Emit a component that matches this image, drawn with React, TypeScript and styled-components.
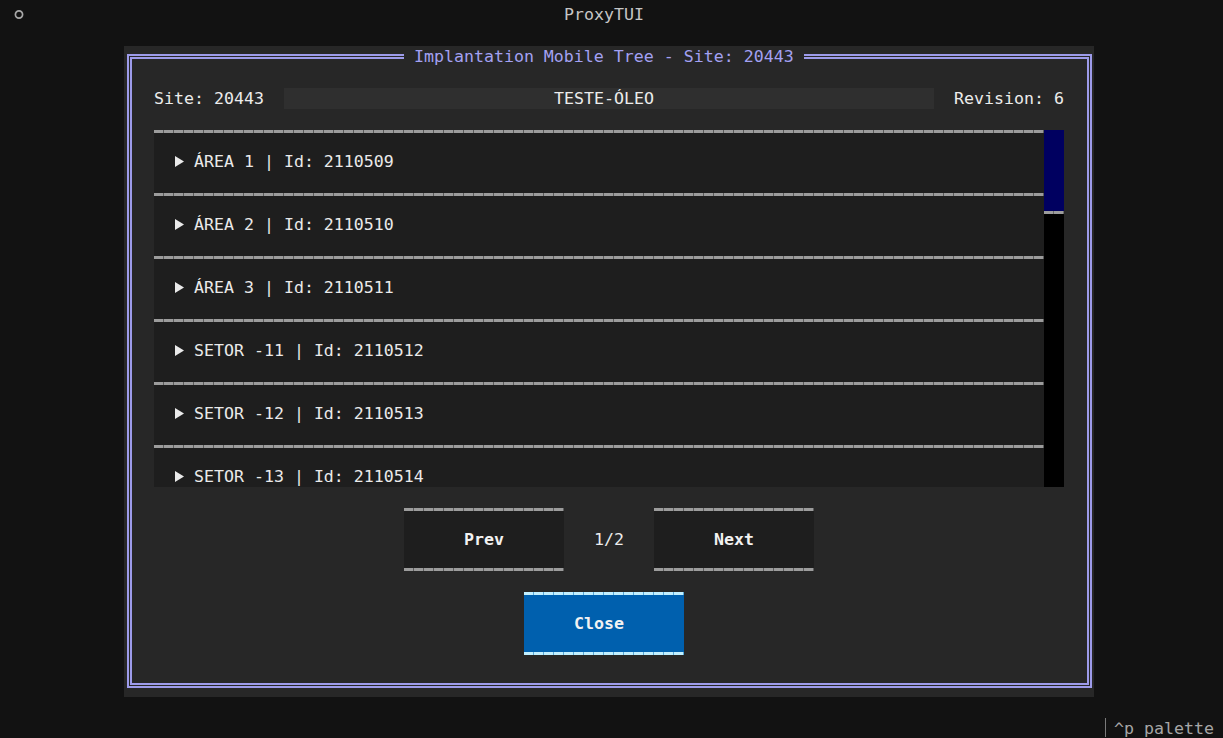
import React from "react";
import styled, { createGlobalStyle } from "styled-components";

const GlobalStyle = createGlobalStyle`
  html, body { margin: 0; padding: 0; background: #121212; }
  body {
    font-family: "DejaVu Sans Mono", "Liberation Mono", monospace;
    font-size: 16.6px;
    line-height: 21px;
    color: #e6e6e6;
    overflow: hidden;
  }
  * { box-sizing: border-box; }
`;

const dashes = (color: string, gap: string) =>
  `repeating-linear-gradient(to right, ${color} 0 9px, ${gap} 9px 10px)`;

const Screen = styled.div`
  width: 1223px;
  height: 738px;
  padding: 4px 0 0 4px;
  display: flex;
  flex-direction: column;
  background: #121212;
  overflow: hidden;
`;

const Header = styled.header`
  width: 1210px;
  height: 21px;
  flex: 0 0 21px;
  position: relative;
  display: flex;
  justify-content: center;
  padding-right: 10px;
  color: #c6c6c6;
`;

const HeaderIcon = styled.svg`
  position: absolute;
  left: 10px;
  top: 6px;
`;

const Main = styled.main`
  width: 1210px;
  height: 693px;
  flex: 0 0 693px;
  display: flex;
  align-items: center;
  justify-content: center;
`;

const Dialog = styled.section`
  width: 970px;
  height: 651px;
  background: #272727;
  padding: 8px 2px 9px 3px;
  display: flex;
`;

const Frame = styled.div`
  position: relative;
  flex: 1;
  border: 5px double #9d9bea;
  padding: 29px 23px 28px 22px;
  display: flex;
  flex-direction: column;
`;

const FrameTitle = styled.div`
  position: absolute;
  top: -13px;
  left: 272px;
  height: 21px;
  padding: 0 10px;
  background: #272727;
  color: #a3a1f2;
  white-space: pre;
`;

const InfoRow = styled.div`
  height: 21px;
  display: flex;
  gap: 20px;
  color: #ececec;
  white-space: pre;
`;

const NameField = styled.div`
  flex: 1;
  background: #2f2f2f;
  text-align: center;
  padding-right: 10px;
`;

const ListArea = styled.div`
  margin-top: 21px;
  height: 357px;
  display: flex;
  overflow: hidden;
`;

const List = styled.div`
  flex: 1;
  background: #1e1e1e;
  overflow: hidden;
`;

const Item = styled.div`
  height: 63px;
  flex-shrink: 0;
  padding: 21px 0 0 20px;
  display: flex;
  align-items: flex-start;
  background: ${dashes("#9c9c9c", "#5c5c5c")} top left / 100% 3px no-repeat, #1e1e1e;
  color: #eaeaea;
  white-space: pre;
`;

const Arrow = styled.svg`
  flex: 0 0 auto;
  margin: 5px 10px 0 1px;
`;

const Scrollbar = styled.div`
  width: 20px;
  display: flex;
  flex-direction: column;
  background: #000000;
`;

const Thumb = styled.div`
  height: 81px;
  background: #000060;
`;

const ThumbEdge = styled.div`
  height: 3px;
  background: ${dashes("#9c9c9c", "#6a6a6a")};
`;

const ButtonRow = styled.div`
  margin-top: 21px;
  display: flex;
  justify-content: center;
`;

const CloseRow = styled.div`
  margin-top: 21px;
  display: flex;
  justify-content: center;
  padding-right: 10px;
`;

const Button = styled.button<{ $primary?: boolean }>`
  width: 160px;
  height: 63px;
  border: none;
  padding: 0 ${(p) => (p.$primary ? "10px" : "0")} 0 0;
  margin: 0;
  font: inherit;
  font-weight: bold;
  color: #f2f2f2;
  background:
    ${(p) => dashes(p.$primary ? "#c2f0ff" : "#9c9c9c", p.$primary ? "#5aa8d8" : "#5c5c5c")} top left / 100% 3px no-repeat,
    ${(p) => dashes(p.$primary ? "#c2f0ff" : "#9c9c9c", p.$primary ? "#5aa8d8" : "#5c5c5c")} bottom left / 100% 3px no-repeat,
    ${(p) => (p.$primary ? "#0060ae" : "#1e1e1e")};
`;

const PageLabel = styled.div`
  width: 90px;
  display: flex;
  align-items: center;
  justify-content: center;
  color: #ececec;
`;

const Footer = styled.footer`
  width: 1210px;
  height: 21px;
  flex: 0 0 21px;
  display: flex;
  justify-content: flex-end;
  color: #a6a6a6;
  white-space: pre;
`;

const FooterSep = styled.span`
  width: 10px;
  height: 19px;
  border-left: 1px solid #7a7a7a;
  position: relative;
  left: 1px;
`;

const items = [
  "ÁREA 1 | Id: 2110509",
  "ÁREA 2 | Id: 2110510",
  "ÁREA 3 | Id: 2110511",
  "SETOR -11 | Id: 2110512",
  "SETOR -12 | Id: 2110513",
  "SETOR -13 | Id: 2110514",
];

export default function App() {
  return (
    <>
      <GlobalStyle />
      <Screen>
        <Header>
          <HeaderIcon width="10" height="10" viewBox="0 0 10 10">
            <circle cx="5" cy="4.5" r="3.6" fill="none" stroke="#a8a8a8" strokeWidth="1.7" />
          </HeaderIcon>
          ProxyTUI
        </Header>
        <Main>
          <Dialog>
            <Frame>
              <FrameTitle>Implantation Mobile Tree - Site: 20443</FrameTitle>
              <InfoRow>
                <span>Site: 20443</span>
                <NameField>TESTE-ÓLEO</NameField>
                <span>Revision: 6</span>
              </InfoRow>
              <ListArea>
                <List>
                  {items.map((t) => (
                    <Item key={t}>
                      <Arrow width="9" height="11" viewBox="0 0 9 11">
                        <polygon points="0,0 9,5.5 0,11" fill="#eaeaea" />
                      </Arrow>
                      {t}
                    </Item>
                  ))}
                </List>
                <Scrollbar>
                  <Thumb />
                  <ThumbEdge />
                </Scrollbar>
              </ListArea>
              <ButtonRow>
                <Button>Prev</Button>
                <PageLabel>1/2</PageLabel>
                <Button>Next</Button>
              </ButtonRow>
              <CloseRow>
                <Button $primary>Close</Button>
              </CloseRow>
            </Frame>
          </Dialog>
        </Main>
        <Footer>
          <FooterSep />
          <span>^p palette</span>
        </Footer>
      </Screen>
    </>
  );
}
